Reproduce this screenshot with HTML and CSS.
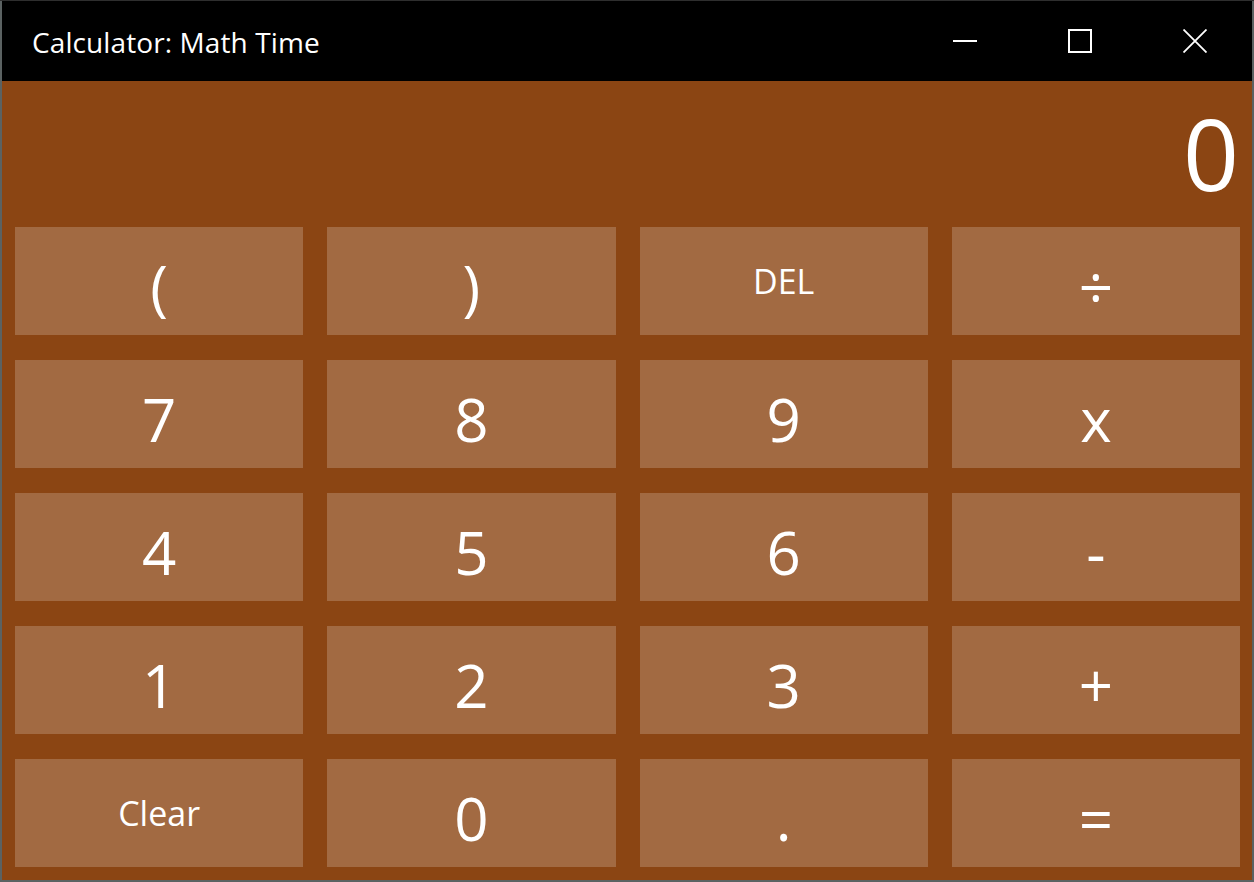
FILE: index.html
```html
<!DOCTYPE html>
<html lang="en">
<head>
<meta charset="utf-8">
<title>Calculator: Math Time</title>
<link rel="stylesheet" href="styles.css">
</head>
<body>
<div class="window">
  <header class="titlebar">
    <div class="title">Calculator: Math Time</div>
    <div class="controls">
      <div class="ctl">
        <svg width="24" height="24" viewBox="0 0 24 24"><path d="M0 12h24" stroke="#fff" stroke-width="2" fill="none"/></svg>
      </div>
      <div class="ctl">
        <svg width="24" height="24" viewBox="0 0 24 24"><rect x="1" y="1" width="22" height="22" stroke="#fff" stroke-width="2" fill="none"/></svg>
      </div>
      <div class="ctl">
        <svg width="24" height="24" viewBox="0 0 24 24"><path d="M0.5 0.5L23.5 23.5M23.5 0.5L0.5 23.5" stroke="#fff" stroke-width="1.8" fill="none"/></svg>
      </div>
    </div>
  </header>
  <main class="body">
    <div class="display">0</div>
    <div class="keys">
      <div class="key">(</div>
      <div class="key">)</div>
      <div class="key small">DEL</div>
      <div class="key">÷</div>
      <div class="key">7</div>
      <div class="key">8</div>
      <div class="key">9</div>
      <div class="key">x</div>
      <div class="key">4</div>
      <div class="key">5</div>
      <div class="key">6</div>
      <div class="key">-</div>
      <div class="key">1</div>
      <div class="key">2</div>
      <div class="key">3</div>
      <div class="key">+</div>
      <div class="key small">Clear</div>
      <div class="key">0</div>
      <div class="key">.</div>
      <div class="key">=</div>
    </div>
  </main>
</div>
</body>
</html>
```
FILE: styles.css
```css
html, body {
  margin: 0;
  padding: 0;
}
body {
  background: #5b6262;
  width: 1254px;
  height: 882px;
  overflow: hidden;
  font-family: "Open Sans", "Noto Sans", sans-serif;
  color: #fff;
  border-top: 1px solid #2e2e2e;
  box-sizing: border-box;
}
.window {
  margin: 0 2px;
  height: 879px;
  display: flex;
  flex-direction: column;
}
.titlebar {
  height: 80px;
  background: #000;
  display: flex;
  align-items: center;
  justify-content: space-between;
}
.title {
  padding-left: 30px;
  font-size: 28px;
  letter-spacing: 0.1px;
  padding-top: 2px;
}
.controls {
  display: flex;
  height: 100%;
}
.ctl {
  width: 115px;
  display: flex;
  align-items: center;
  justify-content: center;
}
.ctl svg { display: block; }
.body {
  flex: 1;
  background: #8b4513;
  display: flex;
  flex-direction: column;
}
.display {
  height: 146px;
  box-sizing: border-box;
  text-align: right;
  font-size: 98px;
  line-height: 1;
  padding-right: 13px;
  padding-top: 23px;
}
.keys {
  display: grid;
  grid-template-columns: repeat(4, 1fr);
  grid-template-rows: repeat(5, 108px);
  column-gap: 24px;
  row-gap: 25px;
  padding: 0 12px 0 13px;
}
.key {
  background: #a26a42;
  display: flex;
  align-items: center;
  justify-content: center;
  font-size: 60px;
  line-height: 1;
  padding-top: 10px;
  box-sizing: border-box;
}
.key.small {
  font-size: 34px;
  padding-top: 0;
}
```
